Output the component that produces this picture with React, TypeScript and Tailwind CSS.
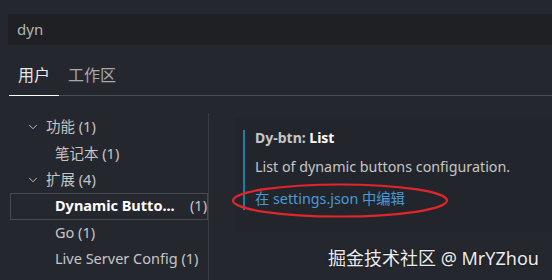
import React from "react";
import { ChevronDown } from "lucide-react";

const FONT = { fontFamily: '"Noto Sans", "Noto Sans CJK SC", sans-serif' };

function TreeRow({
  children,
  indent,
  chevron,
}: {
  children: React.ReactNode;
  indent: string;
  chevron?: boolean;
}) {
  return (
    <div className={`h-[26.4px] flex items-center ${indent} text-[#c6c6c6] whitespace-nowrap`}>
      {chevron && <ChevronDown size={14} strokeWidth={1.6} className="text-[#c6c6c6] mr-[6px] -ml-[19px]" />}
      {children}
    </div>
  );
}

export default function App() {
  return (
    <div className="w-[552px] h-[280px] bg-[#25272f] overflow-hidden relative" style={FONT}>
      {/* search */}
      <div className="pt-[14px] pl-[8px]">
        <div className="h-[31px] bg-[#1f2024] flex items-center pl-[9px] text-[15px] text-[#b5b5b5]">dyn</div>
      </div>

      {/* tabs */}
      <div className="ml-[9px] mt-[19px] flex border-b border-[#4a4c55] text-[16px] leading-[22px]">
        <div className="px-[9px] pb-[9px] text-[#e8e8e8] border-b border-white -mb-px">用户</div>
        <div className="px-[9px] pb-[9px] text-[#a8a8a8]">工作区</div>
      </div>

      {/* body */}
      <div className="flex mt-[17px] text-[14.5px]">
        <div className="w-[209px] border-r border-[#3a3c44] h-[170px] pt-[1px] shrink-0">
          <TreeRow indent="pl-[45px]" chevron>
            功能 (1)
          </TreeRow>
          <TreeRow indent="pl-[55px]">笔记本 (1)</TreeRow>
          <TreeRow indent="pl-[45px]" chevron>
            扩展 (4)
          </TreeRow>
          <div className="h-[26.4px] ml-[10px] border border-[#484a52] flex items-center pl-[44px] pr-[0px] whitespace-nowrap">
            <span className="text-white font-bold flex-1">Dynamic Butto...</span>
            <span className="text-[#c6c6c6]">(1)</span>
          </div>
          <TreeRow indent="pl-[55px]">Go (1)</TreeRow>
          <TreeRow indent="pl-[55px]">Live Server Config (1)</TreeRow>
          <TreeRow indent="pl-[55px]">Remote - SSH (1)</TreeRow>
        </div>

        <div className="flex-1 pl-[26px] pt-[5px]">
          <div className="bg-[#23252c] h-[114px] pl-[8px] pt-[12px]">
            <div className="border-l-2 border-[#1b7fa3] pl-[10px] h-[80px]">
              <div className="text-[14px] text-[#c6c6c6] font-bold leading-[16px]">
                Dy-btn: <span className="text-white">List</span>
              </div>
              <div className="text-[14.3px] text-[#c6c6c6] mt-[12px] leading-[18px] whitespace-nowrap">
                List of dynamic buttons configuration.
              </div>
              <div className="text-[14.3px] text-[#4a9ad8] mt-[14px] leading-[18px] whitespace-nowrap">
                在 settings.json 中编辑
              </div>
            </div>
          </div>
        </div>
      </div>

      {/* red ellipse annotation */}
      <svg className="absolute left-[230px] top-[182px]" width="220" height="38" viewBox="0 0 220 38">
        <ellipse cx="110" cy="18.5" rx="107" ry="16" fill="none" stroke="#e0262a" strokeWidth="2.2" />
      </svg>

      {/* watermark */}
      <div
        className="absolute left-[328px] top-[245px] text-[18px] text-[#ececec] leading-[26px] whitespace-nowrap"
        style={{ textShadow: "0 0 2px rgba(0,0,0,0.6)" }}
      >
        掘金技术社区 @ MrYZhou
      </div>
    </div>
  );
}
